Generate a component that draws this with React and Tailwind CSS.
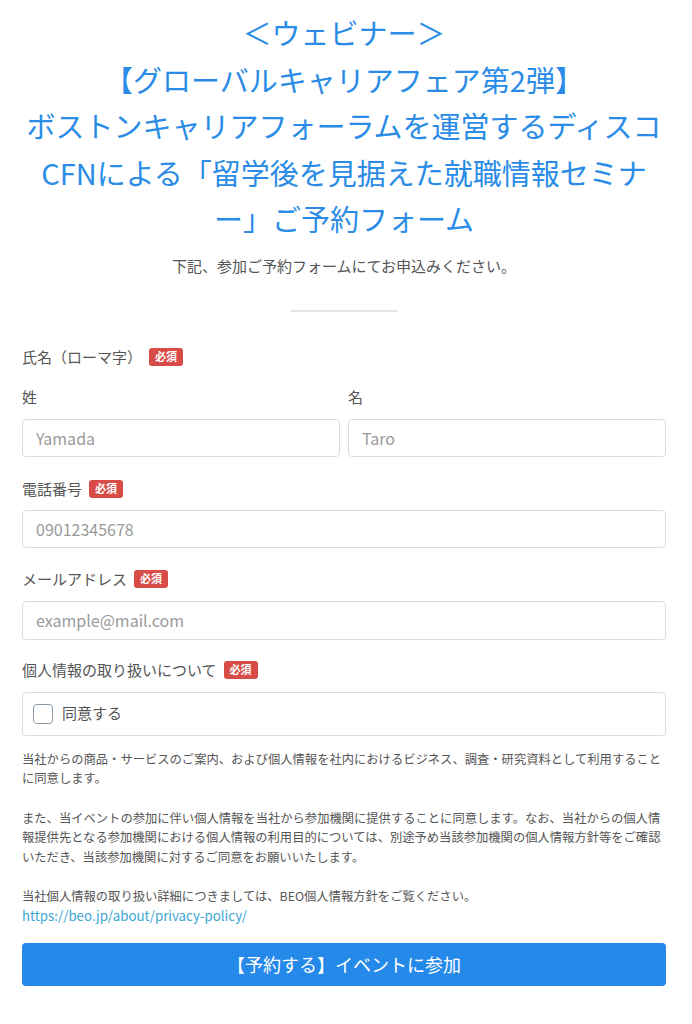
import React from "react";

const font = { fontFamily: '"Noto Sans CJK JP", "Noto Sans", sans-serif' };

function Badge() {
  return (
    <span className="ml-[7px] inline-flex h-[18px] items-center rounded-[3px] bg-[#d84c47] px-[6px] text-[11px] font-bold leading-none text-white">
      必須
    </span>
  );
}

function Label({ children, className = "" }) {
  return (
    <div className={`flex items-center text-[15px] leading-[22px] text-[#555] ${className}`}>
      <span>{children}</span>
      <Badge />
    </div>
  );
}

function Input({ placeholder, className = "" }) {
  return (
    <input
      placeholder={placeholder}
      className={`w-full rounded-[4px] border border-[#dcdcdc] bg-white px-[13px] text-[16px] text-[#333] outline-none placeholder:text-[#9a9a9a] ${className}`}
      style={font}
    />
  );
}

export default function App() {
  return (
    <div className="min-h-[1024px] bg-white pl-[22px] pr-[26px]" style={font}>
      <h1 className="pt-[9px] text-center text-[29px] font-normal leading-[46.5px] text-[#2a8ce6]">
        <div>＜ウェビナー＞</div>
        <div>【グローバルキャリアフェア第2弾】</div>
        <div className="whitespace-nowrap">ボストンキャリアフォーラムを運営するディスコ</div>
        <div className="whitespace-nowrap">CFNによる「留学後を見据えた就職情報セミナ</div>
        <div>ー」ご予約フォーム</div>
      </h1>
      <p className="mt-[13px] text-center text-[15px] leading-[22px] text-[#555]">
        下記、参加ご予約フォームにてお申込みください。
      </p>
      <div className="mx-auto mt-[33px] h-[2px] w-[106px] bg-[#e3e6ea]" />

      <Label className="mt-[34px]">氏名（ローマ字）</Label>
      <div className="mt-[18px] grid grid-cols-2 gap-[8px]">
        <div>
          <div className="text-[15px] leading-[22px] text-[#555]">姓</div>
          <Input placeholder="Yamada" className="mt-[11px] h-[38px]" />
        </div>
        <div>
          <div className="text-[15px] leading-[22px] text-[#555]">名</div>
          <Input placeholder="Taro" className="mt-[11px] h-[38px]" />
        </div>
      </div>

      <Label className="mt-[21px]">電話番号</Label>
      <Input placeholder="09012345678" className="mt-[10px] h-[38px]" />

      <Label className="mt-[20px]">メールアドレス</Label>
      <Input placeholder="example@mail.com" className="mt-[11px] h-[39px]" />

      <Label className="mt-[19px]">個人情報の取り扱いについて</Label>
      <div className="mt-[11px] flex h-[44px] items-center rounded-[4px] border border-[#dcdcdc] px-[10px]">
        <span className="h-[20px] w-[20px] rounded-[4px] border-[1.5px] border-[#8a9aa8] bg-white" />
        <span className="ml-[9px] text-[15px] text-[#555]">同意する</span>
      </div>

      <div className="text-[12.3px] leading-[19.5px] text-[#555]">
        <p className="mt-[14px] whitespace-nowrap">
          当社からの商品・サービスのご案内、および個人情報を社内におけるビジネス、調査・研究資料として利用すること
          <br />
          に同意します。
        </p>
        <p className="mt-[20px] whitespace-nowrap">
          また、当イベントの参加に伴い個人情報を当社から参加機関に提供することに同意します。なお、当社からの個人情
          <br />
          報提供先となる参加機関における個人情報の利用目的については、別途予め当該参加機関の個人情報方針等をご確認
          <br />
          いただき、当該参加機関に対するご同意をお願いいたします。
        </p>
        <p className="mt-[19.5px]">
          当社個人情報の取り扱い詳細につきましては、BEO個人情報方針をご覧ください。
        </p>
        <a href="#" className="block text-[13.3px] leading-[19.5px] text-[#3aa6d4]">https://beo.jp/about/privacy-policy/</a>
      </div>

      <button className="mt-[17px] flex h-[43px] w-full items-center justify-center rounded-[4px] bg-[#2589e9] text-[18px] text-white">
        【予約する】イベントに参加
      </button>
    </div>
  );
}
